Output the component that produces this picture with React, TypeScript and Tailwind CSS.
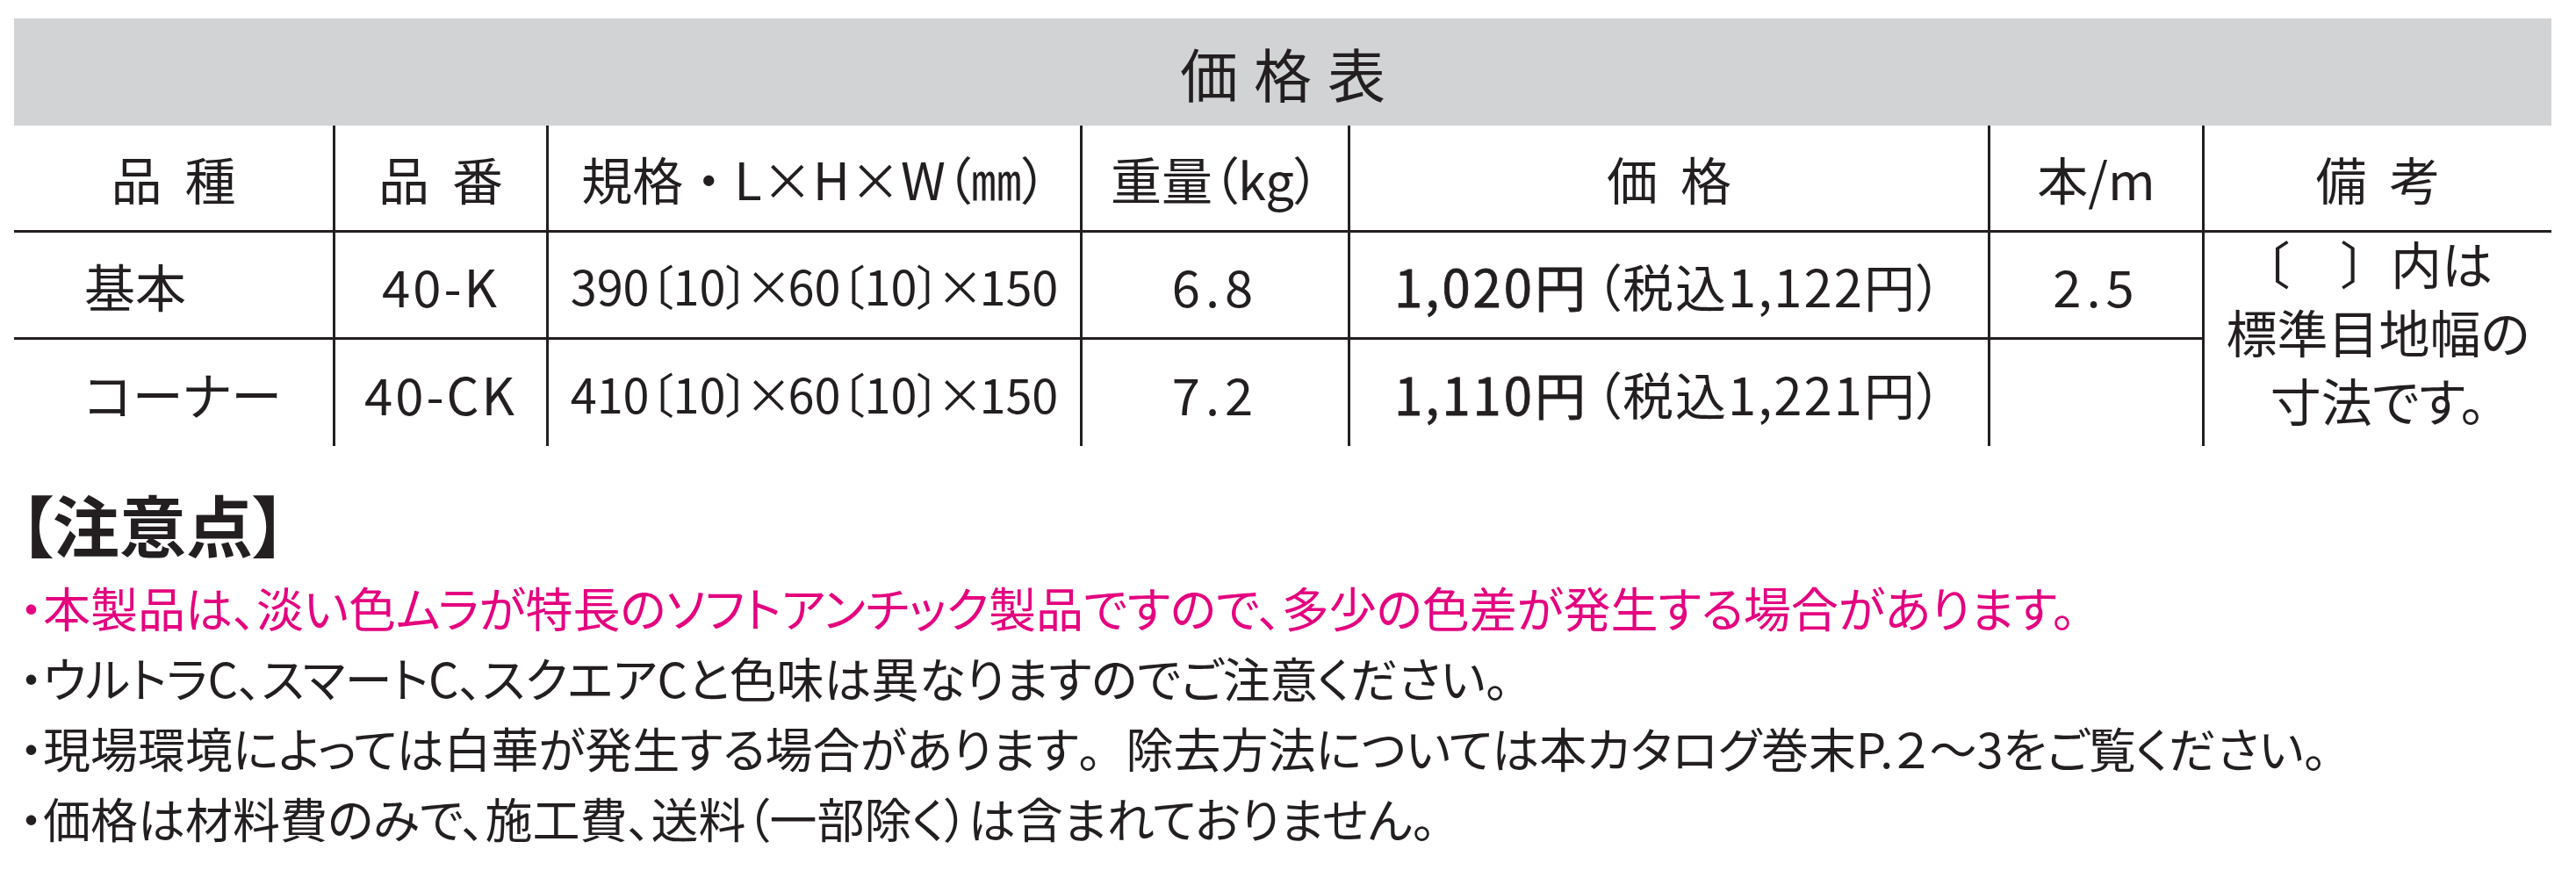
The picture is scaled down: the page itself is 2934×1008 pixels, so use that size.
import React from "react";

const rows = [
  {
    kind: "基本",
    code: "40-K",
    size: "390〔10〕×60〔10〕×150",
    weight: "6.8",
    price: "1,020円",
    tax: "（税込1,122円）",
    perM: "2.5",
  },
  {
    kind: "コーナー",
    code: "40-CK",
    size: "410〔10〕×60〔10〕×150",
    weight: "7.2",
    price: "1,110円",
    tax: "（税込1,221円）",
    perM: "",
  },
];

const Spaced = ({ chars, gap }: { chars: string[]; gap: string }) => (
  <span className={`flex ${gap}`}>
    {chars.map((c, i) => (
      <span key={i}>{c}</span>
    ))}
  </span>
);

// × sits in a narrower box than the font's full width
const Size = ({ text }: { text: string }) => (
  <span className="flex items-center whitespace-nowrap text-[54px]">
    {text.split("×").map((part, i) => (
      <React.Fragment key={i}>
        {i > 0 && <span className="inline-flex w-[44px] justify-center">×</span>}
        <span>{part}</span>
      </React.Fragment>
    ))}
  </span>
);

const App = () => {
  const head = "flex items-center justify-center border-[#231f20] border-b-[3px]";
  const body = "flex items-center justify-center border-[#231f20]";

  return (
    <div
      className="w-[2934px] h-[1008px] bg-white text-[#231f20] [font-feature-settings:'palt'] overflow-hidden"
      style={{ fontFamily: '"Noto Sans CJK JP", "Noto Sans", sans-serif' }}
    >
      <div className="pt-[21px] pl-[16px] w-[2906px]">
        <div className="h-[122px] bg-[#d1d3d4] flex items-center justify-center text-[66px] leading-none">
          <Spaced chars={["価", "格", "表"]} gap="gap-[18px]" />
        </div>

        <div className="grid grid-cols-[366px_243px_608px_305px_729px_244px_395px] grid-rows-[122px_122px_121px] text-[58px] leading-none">
          <div className={`${head} border-r-[3px]`}>
            <Spaced chars={["品", "種"]} gap="gap-[26px]" />
          </div>
          <div className={`${head} border-r-[3px]`}>
            <Spaced chars={["品", "番"]} gap="gap-[26px]" />
          </div>
          <div className={`${head} border-r-[3px]`}>
            規格<span className="[font-feature-settings:normal]">・</span>L×H×W（㎜）
          </div>
          <div className={`${head} border-r-[3px]`}>重量（kg）</div>
          <div className={`${head} border-r-[3px]`}>
            <Spaced chars={["価", "格"]} gap="gap-[26px]" />
          </div>
          <div className={`${head} border-r-[3px]`}>本/m</div>
          <div className={head}>
            <Spaced chars={["備", "考"]} gap="gap-[26px]" />
          </div>

          {rows.map((r, i) => {
            const line = i === 0 ? "border-b-[3px]" : "";
            return (
              <React.Fragment key={r.code}>
                <div className={`${body} ${line} border-r-[3px] justify-start pl-[80px]`}>{r.kind}</div>
                <div className={`${body} ${line} border-r-[3px] tracking-[3px]`}>{r.code}</div>
                <div className={`${body} ${line} border-r-[3px]`}>
                  <Size text={r.size} />
                </div>
                <div className={`${body} ${line} border-r-[3px] tracking-[6px]`}>{r.weight}</div>
                <div className={`${body} ${line} border-r-[3px]`}>
                  <span className="tracking-[3px] mr-[8px] [-webkit-text-stroke:0.8px_#231f20]">{r.price}</span>
                  <span className="tracking-[2px]">{r.tax}</span>
                </div>
                <div className={`${body} ${line} border-r-[3px] tracking-[6px]`}>{r.perM}</div>
                {i === 0 && (
                  <div className="row-span-2 flex flex-col items-center justify-center leading-[78px] pb-[20px]">
                    <span>
                      〔　<span className="[font-feature-settings:normal]">〕</span>内は
                    </span>
                    <span>標準目地幅の</span>
                    <span>寸法です。</span>
                  </div>
                )}
              </React.Fragment>
            );
          })}
        </div>
      </div>

      <div className="pl-[22px] mt-[48px]">
        <div className="text-[76px] leading-[80px] font-bold">【注意点】</div>
        <div className="mt-[16px] text-[54px] leading-[80px]">
          <div className="text-[#e4007f]">
            ・本製品は、淡い色ムラが特長のソフトアンチック製品ですので、多少の色差が発生する場合があります。
          </div>
          <div>・ウルトラC、スマートC、スクエアCと色味は異なりますのでご注意ください。</div>
          <div>
            ・現場環境によっては白華が発生する場合があります
            <span className="[font-feature-settings:normal]">。</span>
            除去方法については本カタログ巻末P.２〜3をご覧ください。
          </div>
          <div>・価格は材料費のみで、施工費、送料（一部除く）は含まれておりません。</div>
        </div>
      </div>
    </div>
  );
};

export default App;
